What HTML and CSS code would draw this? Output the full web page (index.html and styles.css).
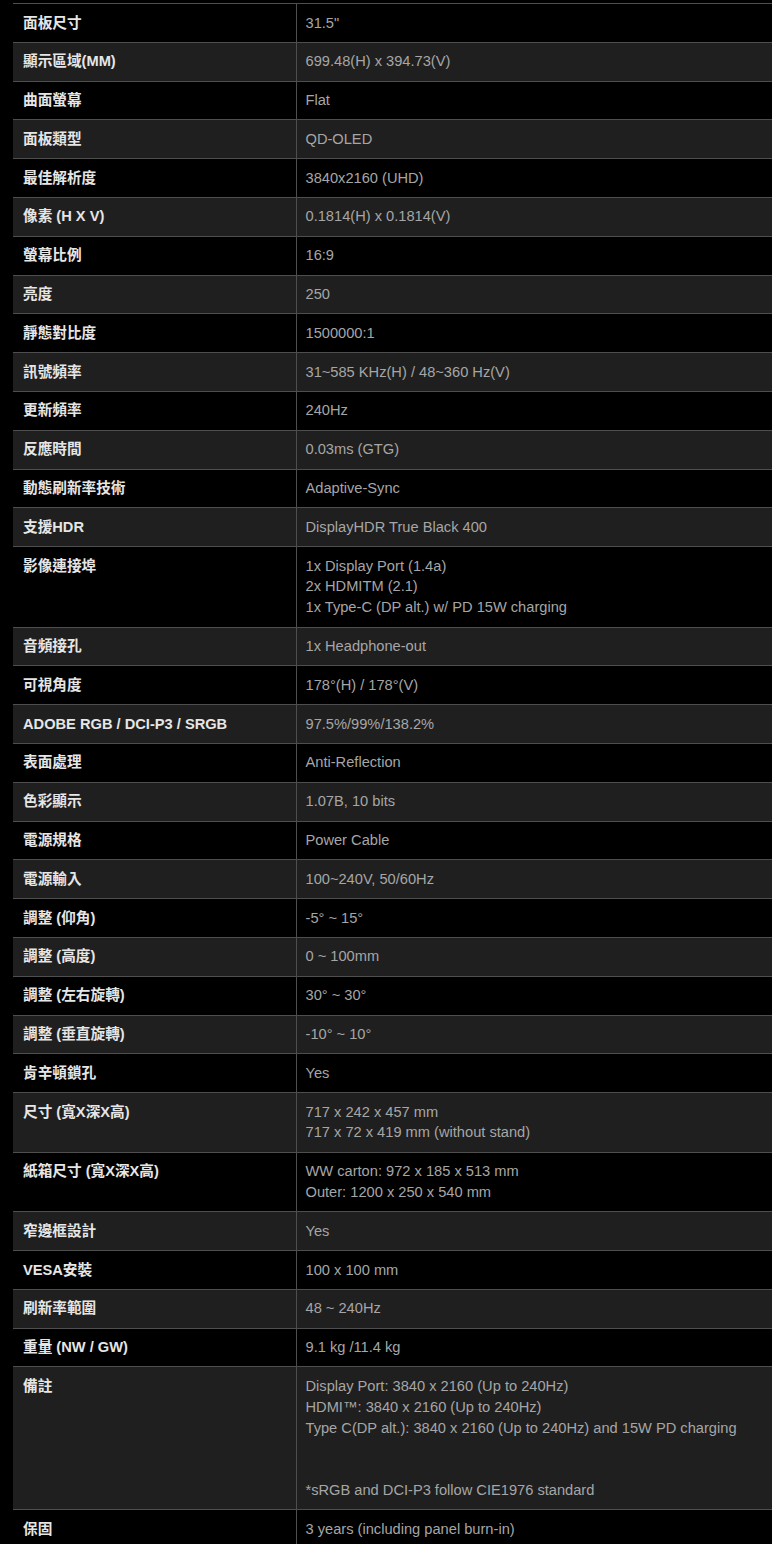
FILE: index.html
```html
<!DOCTYPE html>
<html lang="zh-Hant">
<head>
<meta charset="utf-8">
<title>規格</title>
<link rel="stylesheet" href="styles.css">
</head>
<body>
<div class="page">
<table class="spec">
<colgroup><col class="col-label"><col class="col-value"></colgroup>
<tbody>
<tr><th>面板尺寸</th><td>31.5"</td></tr>
<tr><th>顯示區域(MM)</th><td>699.48(H) x 394.73(V)</td></tr>
<tr><th>曲面螢幕</th><td>Flat</td></tr>
<tr><th>面板類型</th><td>QD-OLED</td></tr>
<tr><th>最佳解析度</th><td>3840x2160 (UHD)</td></tr>
<tr><th>像素 (H X V)</th><td>0.1814(H) x 0.1814(V)</td></tr>
<tr><th>螢幕比例</th><td>16:9</td></tr>
<tr><th>亮度</th><td>250</td></tr>
<tr><th>靜態對比度</th><td>1500000:1</td></tr>
<tr><th>訊號頻率</th><td>31~585 KHz(H) / 48~360 Hz(V)</td></tr>
<tr><th>更新頻率</th><td>240Hz</td></tr>
<tr><th>反應時間</th><td>0.03ms (GTG)</td></tr>
<tr><th>動態刷新率技術</th><td>Adaptive-Sync</td></tr>
<tr><th>支援HDR</th><td>DisplayHDR True Black 400</td></tr>
<tr><th>影像連接埠</th><td>1x Display Port (1.4a)<br>2x HDMITM (2.1)<br>1x Type-C (DP alt.) w/ PD 15W charging</td></tr>
<tr><th>音頻接孔</th><td>1x Headphone-out</td></tr>
<tr><th>可視角度</th><td>178°(H) / 178°(V)</td></tr>
<tr><th>ADOBE RGB / DCI-P3 / SRGB</th><td>97.5%/99%/138.2%</td></tr>
<tr><th>表面處理</th><td>Anti-Reflection</td></tr>
<tr><th>色彩顯示</th><td>1.07B, 10 bits</td></tr>
<tr><th>電源規格</th><td>Power Cable</td></tr>
<tr><th>電源輸入</th><td>100~240V, 50/60Hz</td></tr>
<tr><th>調整 (仰角)</th><td>-5° ~ 15°</td></tr>
<tr><th>調整 (高度)</th><td>0 ~ 100mm</td></tr>
<tr><th>調整 (左右旋轉)</th><td>30° ~ 30°</td></tr>
<tr><th>調整 (垂直旋轉)</th><td>-10° ~ 10°</td></tr>
<tr><th>肯辛頓鎖孔</th><td>Yes</td></tr>
<tr><th>尺寸 (寬X深X高)</th><td>717 x 242 x 457 mm<br>717 x 72 x 419 mm (without stand)</td></tr>
<tr><th>紙箱尺寸 (寬X深X高)</th><td>WW carton: 972 x 185 x 513 mm<br>Outer: 1200 x 250 x 540 mm</td></tr>
<tr><th>窄邊框設計</th><td>Yes</td></tr>
<tr><th>VESA安裝</th><td>100 x 100 mm</td></tr>
<tr><th>刷新率範圍</th><td>48 ~ 240Hz</td></tr>
<tr><th>重量 (NW / GW)</th><td>9.1 kg /11.4 kg</td></tr>
<tr><th>備註</th><td>Display Port: 3840 x 2160 (Up to 240Hz)<br>HDMI™: 3840 x 2160 (Up to 240Hz)<br>Type C(DP alt.): 3840 x 2160 (Up to 240Hz) and 15W PD charging<br><br><br>*sRGB and DCI-P3 follow CIE1976 standard</td></tr>
<tr><th>保固</th><td>3 years (including panel burn-in)</td></tr>
</tbody>
</table>
</div>
</body>
</html>
```
FILE: styles.css
```css
html, body {
  margin: 0;
  padding: 0;
  background: #000;
}

.page {
  padding: 3px 0 0 13px;
  overflow: hidden;
}

.spec {
  width: 759px;
  border-collapse: collapse;
  table-layout: fixed;
  font-family: "Liberation Sans", Arial, "Noto Sans CJK TC", sans-serif;
  font-size: 14.65px;
  line-height: 20.8px;
  border-top: 1px solid #4e4e4e;
}

.col-label {
  width: 283px;
}

.spec tr {
  border-bottom: 1px solid #4e4e4e;
}

.spec tr:nth-child(even) {
  background: #1f1f1f;
}

.spec th {
  text-align: left;
  vertical-align: top;
  font-weight: bold;
  color: #e6e6e6;
  padding: 8.5px 10px 8.5px 10px;
  border-right: 1px solid #4e4e4e;
}

.spec td {
  vertical-align: top;
  color: #a6a6a6;
  padding: 8.5px 10px 8.5px 9px;
  white-space: nowrap;
}
```
